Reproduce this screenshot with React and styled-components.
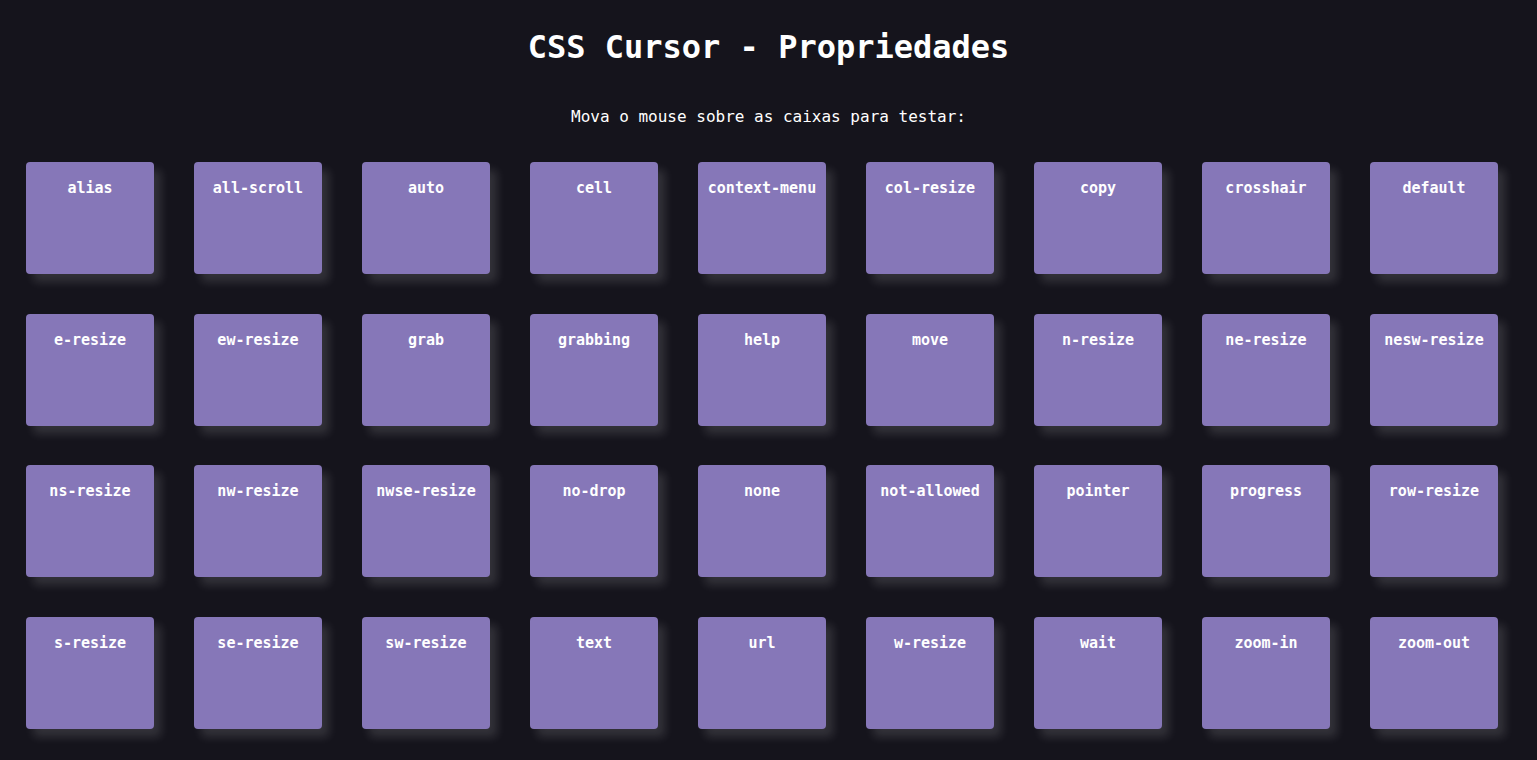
import React from "react";
import styled, { createGlobalStyle } from "styled-components";

const cursors = [
  "alias", "all-scroll", "auto", "cell", "context-menu", "col-resize", "copy", "crosshair", "default",
  "e-resize", "ew-resize", "grab", "grabbing", "help", "move", "n-resize", "ne-resize", "nesw-resize",
  "ns-resize", "nw-resize", "nwse-resize", "no-drop", "none", "not-allowed", "pointer", "progress", "row-resize",
  "s-resize", "se-resize", "sw-resize", "text", "url", "w-resize", "wait", "zoom-in", "zoom-out"
];

const GlobalStyle = createGlobalStyle`
  html, body {
    margin: 0;
    padding: 0;
    background-color: #15141c;
    color: #ffffff;
    font-family: "DejaVu Sans Mono", "Liberation Mono", monospace;
  }
`;

const Page = styled.main`
  box-sizing: border-box;
  width: 100%;
  min-height: 760px;
  padding: 27px 0 30px;
  display: flex;
  flex-direction: column;
  align-items: center;
`;

const Title = styled.h1`
  margin: 0;
  font-size: 32px;
  line-height: 40px;
  font-weight: 700;
`;

const Subtitle = styled.p`
  margin: 40px 0 35px;
  font-size: 16px;
  line-height: 20px;
`;

const Grid = styled.section`
  align-self: flex-start;
  margin-left: 26px;
  display: grid;
  grid-template-columns: repeat(9, 128px);
  column-gap: 40px;
  row-gap: 39.5px;
`;

const Box = styled.div`
  box-sizing: border-box;
  width: 128px;
  height: 112px;
  padding-top: 17px;
  background-color: #8677b8;
  border-radius: 4px;
  box-shadow: 7px 8px 10px rgba(255, 255, 255, 0.13);
  text-align: center;
  font-size: 15px;
  line-height: 18px;
  font-weight: 700;
  cursor: ${(p) => p.$cursor};
`;

export default function App() {
  return (
    <>
      <GlobalStyle />
      <Page>
        <Title>CSS Cursor - Propriedades</Title>
        <Subtitle>Mova o mouse sobre as caixas para testar:</Subtitle>
        <Grid>
          {cursors.map((c) => (
            <Box key={c} $cursor={c === "url" ? "auto" : c}>
              {c}
            </Box>
          ))}
        </Grid>
      </Page>
    </>
  );
}
